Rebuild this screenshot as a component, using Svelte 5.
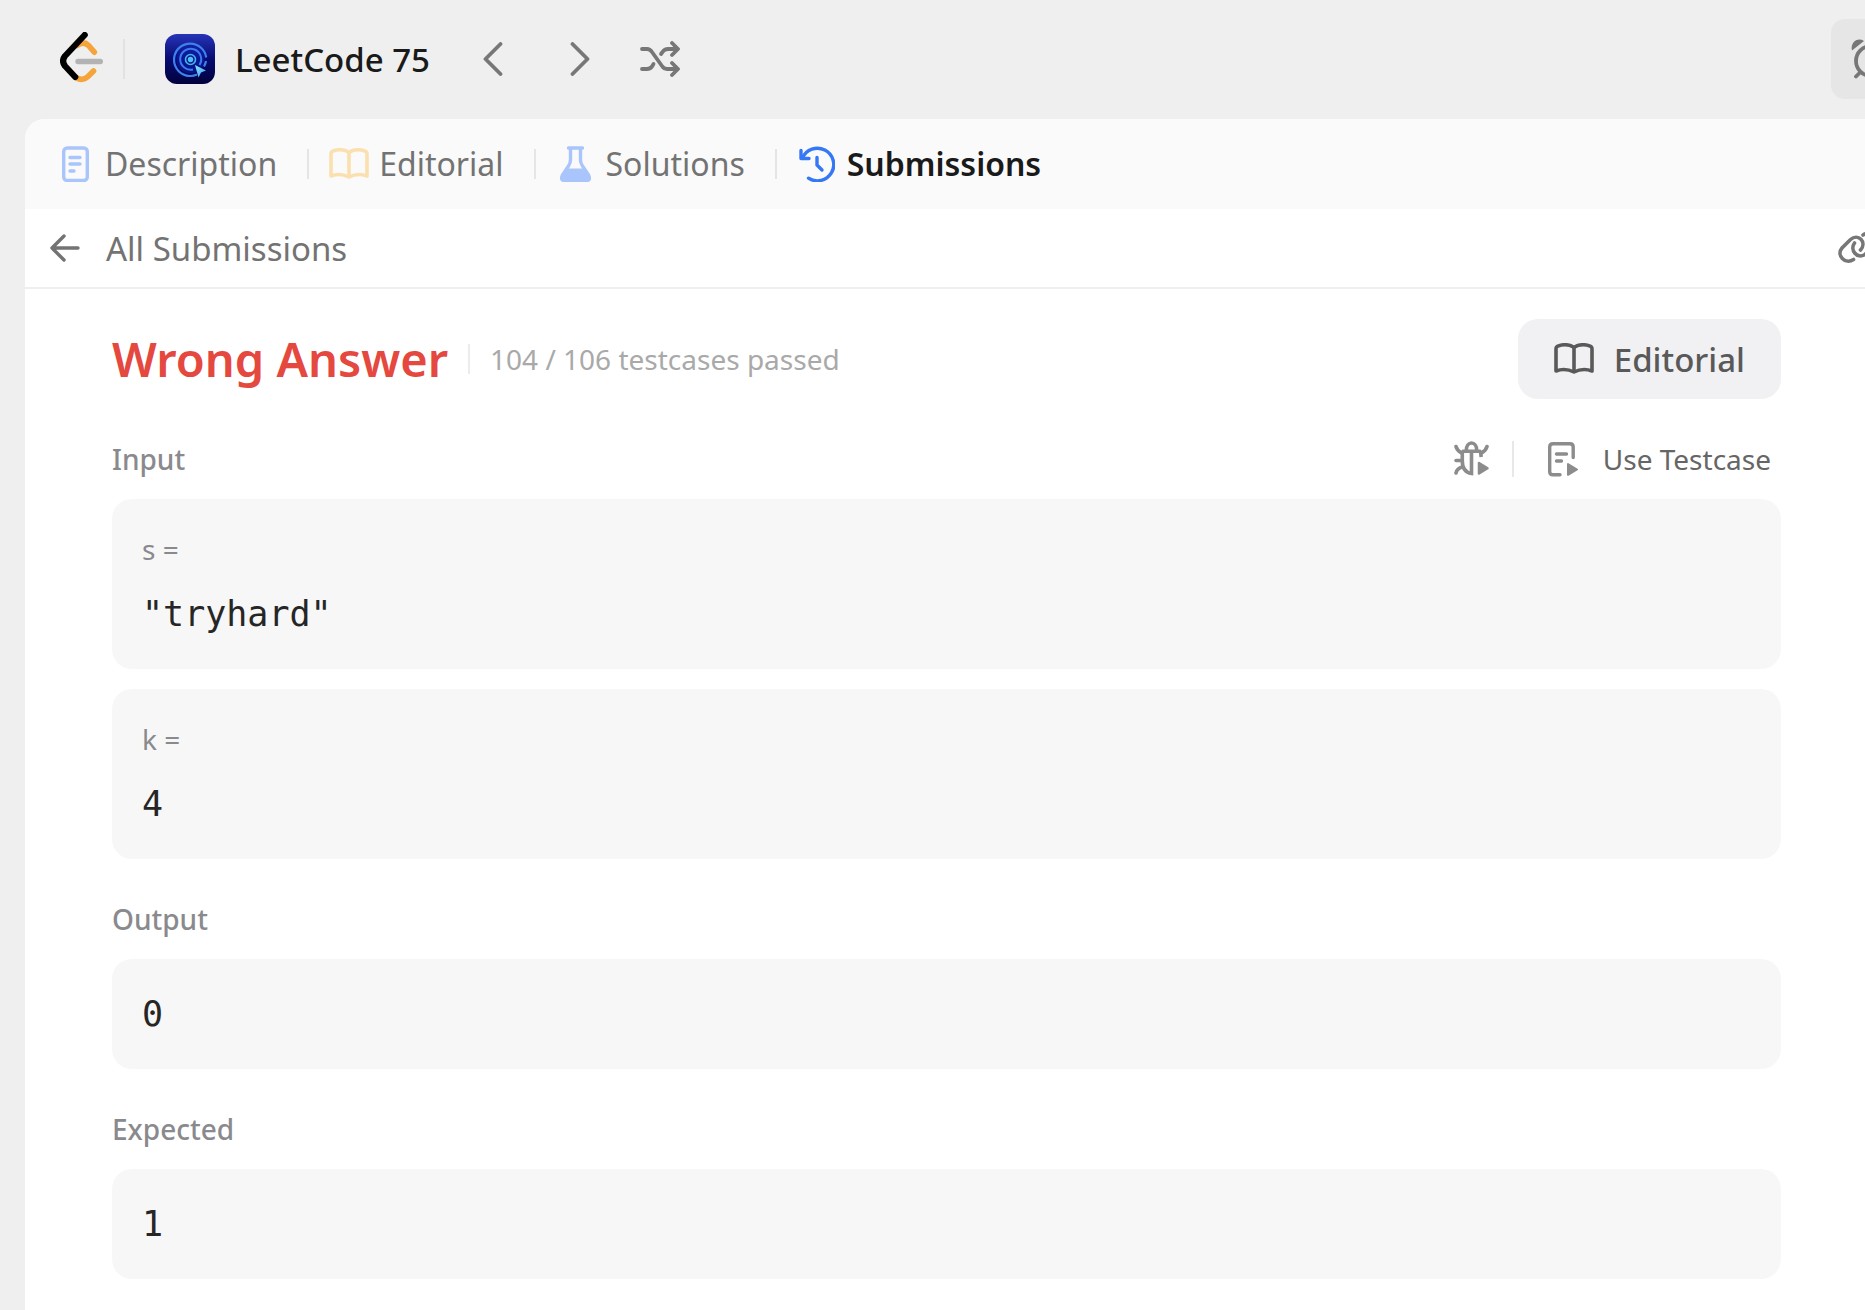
<script>
    const inputs = [
        { name: 's', value: '"tryhard"' },
        { name: 'k', value: '4' }
    ];

    const results = [
        { label: 'Output', value: '0' },
        { label: 'Expected', value: '1' }
    ];

    let activeTab = $state('Submissions');
    const tabs = ['Description', 'Editorial', 'Solutions', 'Submissions'];
</script>

{#snippet book()}
    <svg width="40" height="32" viewBox="0 0 40 32" fill="none" stroke="currentColor" stroke-width="3.6" stroke-linejoin="round">
        <path d="M20 4.2C15 1.4 8.5 1.3 3.8 3.2Q2 4 2 6V28Q11 24.5 20 29Q29 24.5 38 28V6Q38 4 36.2 3.2C31.5 1.3 25 1.4 20 4.2Z" />
        <path d="M20 4.2V29" />
    </svg>
{/snippet}

{#snippet tabIcon(name)}
    {#if name === 'Description'}
        <svg width="27" height="36" viewBox="0 0 27 36" fill="none" stroke="#a9c5fb" stroke-width="3.4" stroke-linecap="round">
            <rect x="1.7" y="2" width="23.6" height="32.5" rx="3.5" />
            <path d="M8 11.5H18M8 18H18M8 25H12" />
        </svg>
    {:else if name === 'Editorial'}
        {@render book()}
    {:else if name === 'Solutions'}
        <svg width="31" height="36" viewBox="0 0 31 36" fill="none" stroke="#a9c5fb" stroke-width="3.4" stroke-linecap="round" stroke-linejoin="round">
            <path d="M8.5 2H22.5M10.5 2V14Q10.5 17 8.5 20L2.5 29Q0 34.5 4.5 34.5H26.5Q31 34.5 28.5 29L22.5 20Q20.5 17 20.5 14V2" />
            <path d="M6.5 22.5H24.5L28.5 31Q28.5 34 26 34H5Q2.5 34 2.5 31Z" fill="#a9c5fb" stroke="none" />
        </svg>
    {:else}
        <svg width="36" height="36" viewBox="0 0 36 36" fill="none" stroke="#3478f6" stroke-width="3.4" stroke-linecap="round" stroke-linejoin="round">
            <path d="M2 4.5V12.5H10" />
            <path d="M3.5 12A16.3 16.3 0 1 1 9.5 32.2" />
            <path d="M18 11.5V19L23 24" />
        </svg>
    {/if}
{/snippet}

<div class="page">
    <header class="navbar">
        <a class="logo" href="/" aria-label="Home">
            <svg width="43" height="54" viewBox="0 0 43 54" fill="none" stroke-linecap="round">
                <path d="M17 13.5Q23.5 8.5 28.5 13.5L34.3 20.2" stroke="#f5a33b" stroke-width="5.6" />
                <path d="M16 45.5Q22.5 49.5 28 44.5L33.5 39" stroke="#f5a33b" stroke-width="5.6" />
                <path d="M24.7 3L5 24Q1.2 29 5 34L15.2 45" stroke="#000" stroke-width="6.2" stroke-linejoin="round" />
                <path d="M18 29.5H40.3" stroke="#b3b3b3" stroke-width="5.4" />
            </svg>
        </a>
        <span class="nav-divider"></span>
        <a class="plan" href="/studyplan">
            <svg width="50" height="50" viewBox="0 0 50 50" fill="none">
                <defs>
                    <linearGradient id="plan-bg" x1="0" y1="0" x2="0" y2="1">
                        <stop offset="0" stop-color="#2634b8" />
                        <stop offset=".5" stop-color="#080b72" />
                        <stop offset="1" stop-color="#02023c" />
                    </linearGradient>
                    <linearGradient id="plan-cursor" x1="0" y1="0" x2="1" y2="1">
                        <stop offset="0" stop-color="#8ee4ff" />
                        <stop offset="1" stop-color="#3d9af0" />
                    </linearGradient>
                </defs>
                <rect width="50" height="50" rx="12" fill="url(#plan-bg)" />
                <circle cx="25.5" cy="25.5" r="14" fill="#0a1fa8" opacity=".6" />
                <path d="M41.2 23.5A16 16 0 0 0 36 13.7A16.2 16.2 0 1 0 32 40.5M41 27Q40.5 30 39 32.5" stroke="#3b82f0" stroke-width="2.2" />
                <path d="M34.5 31A10.5 10.5 0 1 0 28 35.5" stroke="#3f78ee" stroke-width="2" />
                <circle cx="25.5" cy="25.5" r="5" stroke="#43b5ee" stroke-width="1.6" />
                <circle cx="25.5" cy="25.5" r="2.7" fill="#4fbdf5" />
                <path d="M30 31L41 36.5L36 38.5L33.5 43.5Z" fill="url(#plan-cursor)" />
            </svg>
            <span>LeetCode 75</span>
        </a>
        <div class="nav-buttons">
            <button class="icon-button" aria-label="Previous question">
                <svg width="20" height="34" viewBox="0 0 20 34" fill="none" stroke="currentColor" stroke-width="3.8" stroke-linecap="round" stroke-linejoin="round">
                    <path d="M17.5 2L2.5 17L17.5 32" />
                </svg>
            </button>
            <button class="icon-button" aria-label="Next question">
                <svg width="20" height="34" viewBox="0 0 20 34" fill="none" stroke="currentColor" stroke-width="3.8" stroke-linecap="round" stroke-linejoin="round">
                    <path d="M2.5 2L17.5 17L2.5 32" />
                </svg>
            </button>
            <button class="icon-button shuffle" aria-label="Random question">
                <svg width="40" height="36" viewBox="0 0 40 36" fill="none" stroke="currentColor" stroke-width="3.8" stroke-linecap="round" stroke-linejoin="round">
                    <path d="M2 8H7Q10 8 12 11L22 25Q24 28 27 28H37" />
                    <path d="M2 28H7Q10 28 12 25.5L13.5 23M21 13L22.5 11Q24.5 8 28 8H37" />
                    <path d="M32 2L38 8L32 14M32 22L38 28L32 34" />
                </svg>
            </button>
        </div>
        <button class="timer" aria-label="Timer">
            <svg width="40" height="40" viewBox="0 0 40 40" fill="none" stroke="currentColor" stroke-width="3.8" stroke-linecap="round">
                <circle cx="20" cy="22" r="15" />
                <path d="M9 33.5L5 37.5M31 33.5L35 37.5M20 13V22L26 26" />
                <path d="M1 11.5C-1 3 7-2 13 2Z M39 11.5C41 3 33-2 27 2Z" fill="currentColor" stroke="none" />
            </svg>
        </button>
    </header>

    <main class="panel">
        <nav class="tabs">
            {#each tabs as tab}
                <button class="tab" class:active={tab === activeTab} onclick={() => (activeTab = tab)}>
                    <span class="tab-icon">{@render tabIcon(tab)}</span>
                    <span>{tab}</span>
                </button>
            {/each}
        </nav>

        <div class="subheader">
            <a class="back" href="#submissions">
                <svg width="30" height="28" viewBox="0 0 30 28" fill="none" stroke="currentColor" stroke-width="3.4" stroke-linecap="round" stroke-linejoin="round">
                    <path d="M28 14H2M14 2L2 14L14 26" />
                </svg>
                <span>All Submissions</span>
            </a>
            <button class="icon-button share" aria-label="Copy link">
                <svg width="40" height="34" viewBox="0 0 40 34" fill="none" stroke="currentColor" stroke-width="3.6" stroke-linecap="round">
                    <path d="M15.5 28.5C7 34 -2 24 4 17L12.5 8.5C20 2 29.5 11 22.5 19" />
                    <path d="M16.5 12C11.5 19 19 28.5 27 23.5L35 15C41 7 33-1 25 4" />
                </svg>
            </button>
        </div>

        <div class="content">
            <div class="result">
                <h1>Wrong Answer</h1>
                <span class="result-divider"></span>
                <span class="passed">104 / 106 testcases passed</span>
                <button class="editorial">
                    {@render book()}
                    <span>Editorial</span>
                </button>
            </div>

            <section>
                <div class="section-head">
                    <h2>Input</h2>
                    <button class="icon-button debug" aria-label="Debug testcase">
                        <svg width="36" height="36" viewBox="0 0 36 36" fill="none" stroke="currentColor" stroke-width="3.6" stroke-linecap="round">
                            <path d="M12.3 9.5C12.3 -.5 22.7 -.5 22.7 9.5" />
                            <path d="M9 10.3H26" />
                            <path d="M8.3 10.5V20Q8.3 31 17.5 32.5V11M26.5 10.5L27.2 16" stroke-linecap="butt" />
                            <path d="M2 5.5Q3 9.5 7.5 12M33 5.5Q32 9.5 27.5 12M2 19.5H7M2 32Q3 27.5 8 26" />
                            <path d="M25 22L33.5 27.3L25 32.5Z" fill="currentColor" stroke-width="2.5" stroke-linejoin="round" />
                        </svg>
                    </button>
                    <span class="head-divider"></span>
                    <button class="use-testcase">
                        <svg width="31" height="35" viewBox="0 0 31 35" fill="none" stroke="currentColor" stroke-width="3.4" stroke-linecap="round">
                            <path d="M12 32.8H5Q1.7 32.8 1.7 29.5V5Q1.7 1.7 5 1.7H22Q25.2 1.7 25.2 5V15.5" />
                            <path d="M8.5 12H18.5M8.5 19H13.5" />
                            <path d="M20 22L29 27.5L20 32.8Z" fill="currentColor" stroke-width="2" stroke-linejoin="round" />
                        </svg>
                        <span>Use Testcase</span>
                    </button>
                </div>
                <div class="cards">
                    {#each inputs as input}
                        <div class="card">
                            <div class="name">{input.name} =</div>
                            <div class="value">{input.value}</div>
                        </div>
                    {/each}
                </div>
            </section>

            {#each results as result}
                <section>
                    <div class="section-head">
                        <h2>{result.label}</h2>
                    </div>
                    <div class="card">
                        <div class="value">{result.value}</div>
                    </div>
                </section>
            {/each}
        </div>
    </main>
</div>

<style>
    :global(body) {
        background-color: #efefef;
        font-family: "Segoe UI", "Noto Sans", "Open Sans", sans-serif;
        color: #1a1a1a;
    }

    .page {
        display: flex;
        flex-direction: column;
        min-height: 100vh;
        overflow: hidden;
    }

    button {
        border: 0;
        padding: 0;
        background: none;
        color: inherit;
        font: inherit;
        cursor: pointer;
    }

    a {
        color: inherit;
        text-decoration: none;
    }

    svg {
        display: block;
        flex: none;
    }

    h1, h2 {
        margin: 0;
    }

    .navbar {
        display: flex;
        align-items: center;
        height: 118px;
        margin-bottom: 1px;
        padding-left: 60px;
    }

    .nav-divider {
        width: 2px;
        height: 40px;
        margin: 0 40px 0 20px;
        background-color: #e2e2e2;
    }

    .plan {
        display: flex;
        align-items: center;
        gap: 20px;
        font-size: 33px;
        font-weight: 500;
        white-space: nowrap;
    }

    .nav-buttons {
        display: flex;
        align-items: center;
        gap: 20px;
        margin-left: 29px;
    }

    .icon-button {
        display: flex;
        align-items: center;
        justify-content: center;
        min-width: 67px;
        color: #777;
    }

    .icon-button.shuffle {
        min-width: 54px;
    }

    .timer {
        display: flex;
        align-items: center;
        flex: none;
        width: 80px;
        height: 80px;
        padding: 0 20px;
        margin-left: auto;
        margin-right: -46px;
        border-radius: 14px;
        background-color: #e6e6e6;
        color: #777;
    }

    .panel {
        flex: 1;
        margin-left: 25px;
        border-radius: 20px 0 0 0;
        background-color: #fff;
        overflow: hidden;
    }

    .tabs {
        display: flex;
        align-items: center;
        height: 90px;
        padding-left: 30px;
        background-color: #fafafa;
    }

    .tab {
        display: flex;
        align-items: center;
        gap: 10px;
        font-size: 32px;
        line-height: 48px;
        color: #737373;
    }

    .tab + .tab::before {
        content: "";
        width: 2px;
        height: 30px;
        margin: 0 10px 0 30px;
        background-color: #e5e5e5;
    }

    .tab.active {
        font-weight: 600;
        color: #1a1a1a;
    }

    .tab-icon {
        display: flex;
        justify-content: center;
        width: 40px;
        color: #fae0ae;
    }

    .subheader {
        display: flex;
        align-items: center;
        justify-content: space-between;
        height: 78px;
        padding-left: 25px;
        border-bottom: 2px solid #efefef;
    }

    .back {
        display: flex;
        align-items: center;
        gap: 26px;
        font-size: 33px;
        color: #737373;
    }

    .share {
        margin-right: -26px;
    }

    .content {
        display: flex;
        flex-direction: column;
        gap: 40px;
        padding: 30px 84px 30px 87px;
    }

    .result {
        display: flex;
        align-items: center;
        height: 80px;
    }

    h1 {
        font-size: 47px;
        font-weight: 600;
        color: #e4483f;
    }

    .result-divider {
        width: 2px;
        height: 30px;
        margin: 0 20px;
        background-color: #ececec;
    }

    .passed {
        font-size: 28px;
        color: #a9a9a9;
    }

    .editorial {
        display: flex;
        align-items: center;
        gap: 20px;
        height: 80px;
        margin-left: auto;
        padding: 0 36px;
        border-radius: 20px;
        background-color: #f1f1f3;
        font-size: 33px;
        font-weight: 500;
        color: #595959;
    }

    .section-head {
        display: flex;
        align-items: center;
        height: 40px;
        margin-bottom: 20px;
    }

    h2 {
        margin-right: auto;
        font-size: 28px;
        font-weight: 500;
        color: #8a8a8e;
    }

    .debug {
        color: #8c8c8c;
    }

    .head-divider {
        width: 2px;
        height: 36px;
        margin: 0 34px 0 6px;
        background-color: #e8e8e8;
    }

    .use-testcase {
        display: flex;
        align-items: center;
        gap: 24px;
        margin-right: 10px;
        font-size: 28px;
        color: #666;
    }

    .use-testcase svg {
        color: #8c8c8c;
    }

    .cards {
        display: flex;
        flex-direction: column;
        gap: 20px;
    }

    .card {
        padding: 30px;
        border-radius: 20px;
        background-color: #f7f7f7;
    }

    .name {
        margin-bottom: 20px;
        font-size: 28px;
        line-height: 40px;
        color: #8a8a8e;
    }

    .value {
        font-family: Menlo, "DejaVu Sans Mono", monospace;
        font-size: 35px;
        line-height: 50px;
        color: #262626;
    }
</style>
